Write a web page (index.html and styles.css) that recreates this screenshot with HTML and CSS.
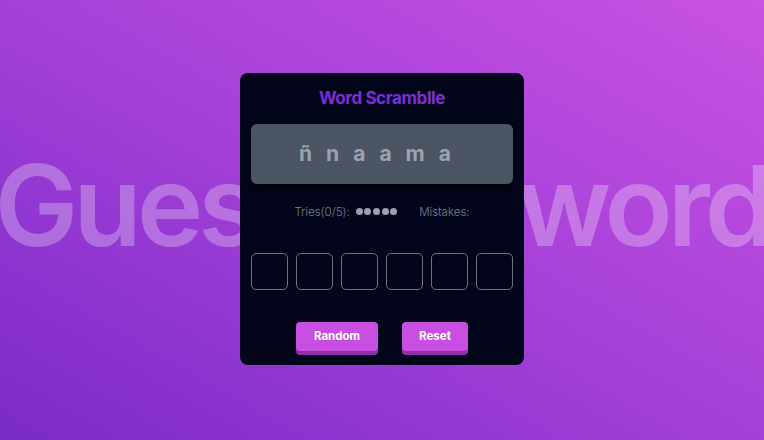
FILE: index.html
```html
<!DOCTYPE html>
<html lang="en">
<head>
<meta charset="utf-8">
<title>Word Scramble</title>
<link rel="stylesheet" href="styles.css">
</head>
<body>
<div class="bg-text">Guess the word</div>
<main class="card">
  <h1 class="title">Word Scramblle</h1>
  <div class="scramble">ñnaama</div>
  <div class="stats">
    <span class="tries">Tries(0/5):</span>
    <span class="dots"><i></i><i></i><i></i><i></i><i></i></span>
    <span class="mistakes">Mistakes:</span>
  </div>
  <div class="slots">
    <span class="slot"></span><span class="slot"></span><span class="slot"></span>
    <span class="slot"></span><span class="slot"></span><span class="slot"></span>
  </div>
  <div class="actions">
    <button class="btn btn-random">Random</button>
    <button class="btn btn-reset">Reset</button>
  </div>
</main>
</body>
</html>
```
FILE: styles.css
```css
* { box-sizing: border-box; }
html, body { margin: 0; padding: 0; }
body {
  width: 764px;
  height: 440px;
  overflow: hidden;
  position: relative;
  display: flex;
  align-items: center;
  justify-content: center;
  background: linear-gradient(to top right, #7a2bc8 0%, #a440d8 50%, #c952e2 100%);
  font-family: Inter, "Noto Sans", sans-serif;
}
.bg-text {
  position: absolute;
  left: 50%;
  top: 140px;
  transform: translateX(-50%);
  white-space: nowrap;
  font-size: 112px;
  line-height: 130px;
  font-weight: 600;
  letter-spacing: -5px;
  color: rgba(255, 255, 255, 0.28);
}
.card {
  position: relative;
  width: 284px;
  margin-bottom: 3px;
  background: #03061a;
  border-radius: 8px;
  padding: 14px 11px 10px;
  display: flex;
  flex-direction: column;
  align-items: center;
}
.title {
  margin: 0;
  font-size: 17px;
  line-height: 22px;
  font-weight: 700;
  letter-spacing: -0.4px;
  color: #7c2fd3;
}
.scramble {
  margin-top: 15px;
  width: 100%;
  height: 60px;
  background: #4b5563;
  border-radius: 6px;
  box-shadow: 0 4px 6px rgba(0, 0, 0, 0.6);
  display: flex;
  align-items: center;
  justify-content: center;
  font-size: 21px;
  font-weight: 700;
  letter-spacing: 14px;
  color: #9ca3af;
}
.stats {
  margin-top: 20px;
  height: 16px;
  line-height: 16px;
  display: flex;
  align-items: center;
  font-size: 11.5px;
  font-weight: 300;
  color: #7b8190;
}
.dots {
  display: flex;
  gap: 1.6px;
  margin-left: 6px;
  margin-right: 22px;
}
.dots i {
  width: 7px;
  height: 7px;
  border-radius: 50%;
  background: #9ca3af;
}
.slots {
  margin-top: 33px;
  width: 100%;
  display: flex;
  gap: 8px;
}
.slot {
  flex: 1;
  height: 37px;
  border: 1px solid #6b7280;
  border-radius: 5px;
}
.actions {
  margin-top: 32px;
  display: flex;
  gap: 24px;
  padding-bottom: 4px;
}
.btn {
  height: 29px;
  border: none;
  border-radius: 4px;
  background: #c84fe1;
  box-shadow: 0 4px 0 #8e2ea8;
  color: #fff;
  font-family: inherit;
  font-size: 11.5px;
  font-weight: 700;
  padding: 0;
}
.btn-random { width: 82px; }
.btn-reset { width: 66px; }
```
